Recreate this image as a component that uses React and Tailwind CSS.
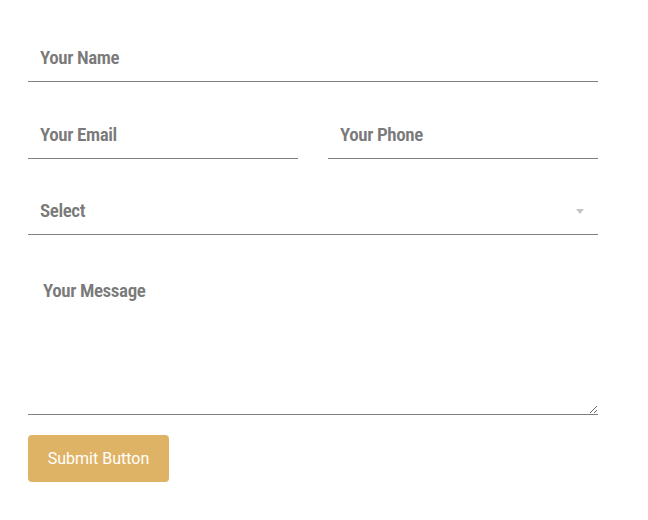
import React from 'react';

const fieldClass =
    'w-full px-3 bg-transparent border-0 border-b border-[#818181] outline-none font-["Roboto",sans-serif] font-stretch-[75%] text-[19px] font-semibold tracking-[-0.4px] text-[#7a7a7a] placeholder:text-[#7a7a7a]';

const App = () => {
    return (
        <div className="min-h-screen bg-white">
            <form className="w-[570px] ml-[28px] pt-[34px] flex flex-col gap-[29px]">
                <input className={`${fieldClass} h-12`} placeholder="Your Name" />

                <div className="flex gap-[30px]">
                    <input className={`${fieldClass} h-12`} placeholder="Your Email" />
                    <input className={`${fieldClass} h-12`} placeholder="Your Phone" />
                </div>

                <div className="relative">
                    <select className={`${fieldClass} h-[47px] appearance-none`} defaultValue="">
                        <option value="">Select</option>
                        <option>Option 1</option>
                        <option>Option 2</option>
                    </select>
                    <span className="pointer-events-none absolute right-[14px] top-[21px] w-0 h-0 border-l-[4px] border-r-[4px] border-t-[5px] border-l-transparent border-r-transparent border-t-[#c4c4c4]"></span>
                </div>

                <div className="flex flex-col gap-5">
                    <textarea
                        className={`${fieldClass} h-[151px] px-[15px] pt-[13px]`}
                        placeholder="Your Message"
                    />
                    <div>
                        <button
                            type="button"
                            className="w-[141px] h-[47px] rounded-[4px] bg-[#dfb366] text-white text-[16px] font-['Roboto',sans-serif]"
                        >
                            Submit Button
                        </button>
                    </div>
                </div>
            </form>
        </div>
    );
};

export default App;
